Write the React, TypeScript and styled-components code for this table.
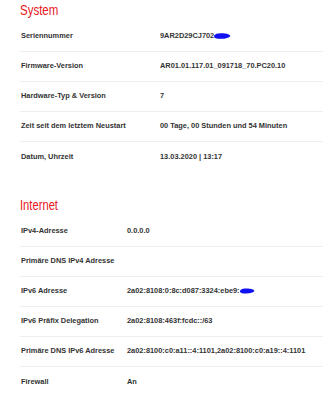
import React from "react";
import styled, { createGlobalStyle } from "styled-components";

const GlobalStyle = createGlobalStyle`
  html, body {
    margin: 0;
    padding: 0;
    background: #fff;
  }
  body {
    font-family: "Liberation Sans", Arial, sans-serif;
    color: #333;
  }
`;

const Page = styled.main`
  width: 323px;
  padding-left: 20px;
  box-sizing: border-box;
`;

const Section = styled.section`
  & + & {
    margin-top: 23px;
  }
`;

const TitleBar = styled.div`
  height: 22px;
  padding-top: 1px;
  box-sizing: border-box;
`;

// condensed light heading in the brand red
const Title = styled.h2<{ $squeeze: number }>`
  display: inline-block;
  margin: 0;
  font-size: 14px;
  line-height: 16px;
  font-weight: 400;
  color: #e8151b;
  transform: scaleX(${({ $squeeze }) => $squeeze});
  transform-origin: left center;
`;

const Row = styled.div<{ $labelWidth: number; $last?: boolean }>`
  display: grid;
  grid-template-columns: ${({ $labelWidth }) => $labelWidth}px 1fr;
  align-items: center;
  height: 30px;
  box-sizing: border-box;
  padding-bottom: 2px;
  border-bottom: ${({ $last }) => ($last ? "none" : "1px solid #efefef")};
  font-size: 7.4px;
  font-weight: 700;
  color: #333;
  white-space: nowrap;
`;

const Label = styled.span`
  padding-left: 1px;
`;

const Value = styled.span`
  display: inline-flex;
  align-items: center;
`;

// blue marker scribble covering part of a value
const Scribble = ({ width }: { width: number }) => (
  <svg width={width} height={8} viewBox="0 0 18 8" style={{ marginLeft: -1 }}>
    <path
      d="M1 4 C2 1 8 1 12 1.5 C15 1.5 17 3 17.5 4 C16 6 12 7 7 6.8 C4 6.8 1 6.5 1 4 Z"
      fill="#1010f0"
    />
  </svg>
);

type Entry = { label: string; value: React.ReactNode };

const system: Entry[] = [
  {
    label: "Seriennummer",
    value: (
      <>
        9AR2D29CJ702
        <Scribble width={18} />
      </>
    ),
  },
  { label: "Firmware-Version", value: "AR01.01.117.01_091718_70.PC20.10" },
  { label: "Hardware-Typ & Version", value: "7" },
  { label: "Zeit seit dem letztem Neustart", value: "00 Tage, 00 Stunden und 54 Minuten" },
  { label: "Datum, Uhrzeit", value: "13.03.2020 | 13:17" },
];

const internet: Entry[] = [
  { label: "IPv4-Adresse", value: "0.0.0.0" },
  { label: "Primäre DNS IPv4 Adresse", value: "" },
  {
    label: "IPv6 Adresse",
    value: (
      <>
        2a02:8108:0:8c:d087:3324:ebe9:
        <Scribble width={16} />
      </>
    ),
  },
  { label: "IPv6 Präfix Delegation", value: "2a02:8108:463f:fcdc::/63" },
  {
    label: "Primäre DNS IPv6 Adresse",
    value: "2a02:8100:c0:a11::4:1101,2a02:8100:c0:a19::4:1101",
  },
  { label: "Firewall", value: "An" },
];

const InfoTable = ({
  title,
  squeeze,
  entries,
  labelWidth,
}: {
  title: string;
  squeeze: number;
  entries: Entry[];
  labelWidth: number;
}) => (
  <Section>
    <TitleBar>
      <Title $squeeze={squeeze}>{title}</Title>
    </TitleBar>
    {entries.map((e, i) => (
      <Row key={e.label} $labelWidth={labelWidth} $last={i === entries.length - 1}>
        <Label>{e.label}</Label>
        <Value>{e.value}</Value>
      </Row>
    ))}
  </Section>
);

const App = () => (
  <>
    <GlobalStyle />
    <Page>
      <InfoTable title="System" squeeze={0.82} entries={system} labelWidth={140} />
      <InfoTable title="Internet" squeeze={0.8} entries={internet} labelWidth={107} />
    </Page>
  </>
);

export default App;
